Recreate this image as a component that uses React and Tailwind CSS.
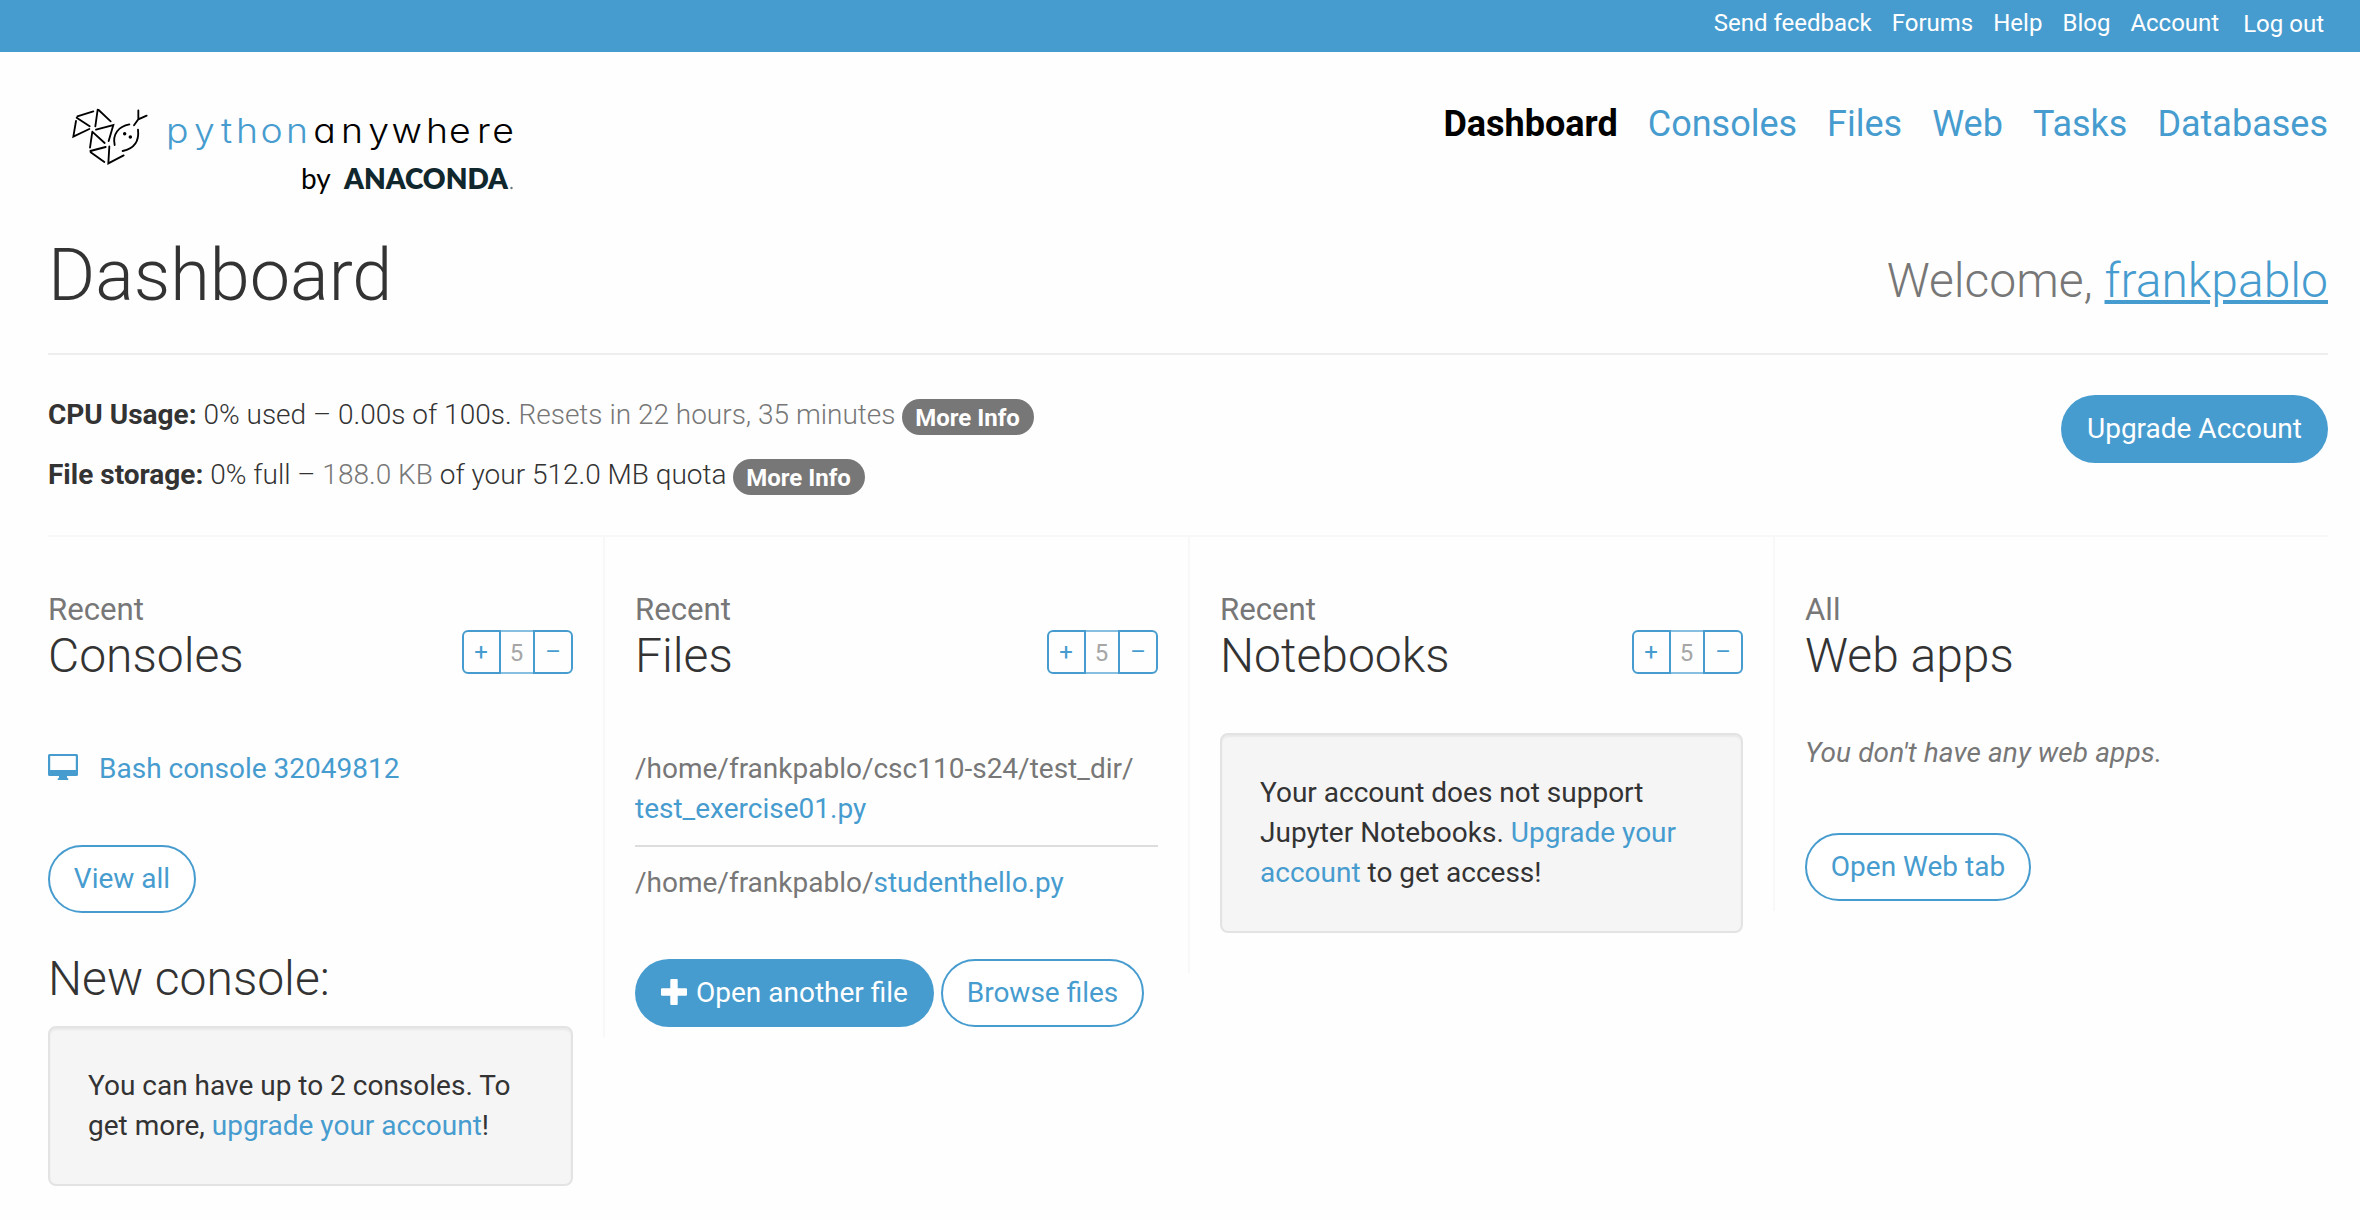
const BLUE_OUTLINE =
  'inline-flex h-[68px] items-center justify-center rounded-[34px] border-2 border-[#479ccf] bg-white text-[28px] leading-[40px] text-[#479ccf]';

function SnakeMark() {
  return (
    <svg
      viewBox="0 0 330 240"
      className="h-[80px] w-[110px] shrink-0"
      fill="none"
      stroke="#000"
      strokeWidth="5.5"
      strokeLinecap="round"
    >
      <path d="M52 64L100 49M50 68L89 94M48 78L40 125L88 102M113 44L106 94M116 45L152 79" />
      <path d="M108 104L160 90L146 138M97 110L90 158M99 112L134 144M91 168L137 156M92 172L133 201M148 154L145 205L191 181" />
      <path d="M164 150C157 118 175 94 208 88M234 104C238 138 222 161 188 168" />
      <path d="M222 91L235 73L260 62M235 73L235 46" />
      <circle cx="194" cy="116" r="2.5" fill="#000" />
      <circle cx="211" cy="126" r="2.5" fill="#000" />
    </svg>
  );
}

function Wordmark() {
  return (
    <svg viewBox="-10 0 360 110" className="-ml-[10px] h-[110px] w-[360px] shrink-0">
      <g
        transform="scale(1.1 1)"
        fontFamily="Inter, sans-serif"
        fontSize="34"
        fontWeight="300"
        style={{ fontFeatureSettings: '"cv11"' }}
      >
        <text y="48" x="-3.7 21.8 46.4 60 82.2 105.5" fill="#479ccf">
          python
        </text>
        <text y="48" x="130.3 155.5 180.2 201.4 232.7 253.6 279 293" fill="#000">
          anywhere
        </text>
      </g>
      <text x="131" y="94" fontFamily="Lato, sans-serif" fontSize="28" fill="#000">
        by
      </text>
      <text
        x="174"
        y="94"
        fontFamily="Lato, sans-serif"
        fontSize="28"
        fontWeight="800"
        fill="#10282d"
        textLength="164"
      >
        ANACONDA
      </text>
      <circle cx="341.500" cy="93" r="1.2" fill="#6b7678" />
    </svg>
  );
}

function MonitorIcon() {
  return (
    <svg viewBox="0 0 30 26" className="mb-[4px] h-[26px] w-[30px] shrink-0" fill="#479ccf">
      <path
        fillRule="evenodd"
        d="M1.5 0h27A1.5 1.5 0 0 1 30 1.500v19a1.500 1.500 0 0 1-1.500 1.500H19v1.500l1.300 1.200V26H9.700v-1.300l1.300-1.200V22H1.500A1.500 1.500 0 0 1 0 20.500v-19A1.500 1.500 0 0 1 1.500 0zM2.200 2v14h25.600V2z"
      />
    </svg>
  );
}

function PlusIcon() {
  return (
    <svg viewBox="0 0 26 26" className="mb-[2px] h-[26px] w-[26px] shrink-0" fill="#fff">
      <path d="M10.300 0h5.400q1 0 1 1v8.300H25q1 0 1 1v5.400q0 1-1 1h-8.300V25q0 1-1 1h-5.400q-1 0-1-1v-8.300H1q-1 0-1-1v-5.400q0-1 1-1h8.300V1q0-1 1-1z" />
    </svg>
  );
}

function Counter() {
  return (
    <div className="mt-[41px] flex h-[44px] w-[111px] text-[24px] leading-[38px] text-[#479ccf]">
      <button className="w-[39px] rounded-l-[6px] border-2 border-[#479ccf] pr-[1px]">+</button>
      <span className="w-[32px] border-y-2 border-[#87bfe1] pt-[2px] pr-[1px] text-center text-[#a6a6a6]">5</span>
      <button className="w-[40px] rounded-r-[6px] border-2 border-[#479ccf]">–</button>
    </div>
  );
}

function Heading({ small, title, counter }) {
  return (
    <div className="flex h-[103px] justify-between">
      <h2>
        <span className="block text-[31.2px] leading-[41px] text-[#777]">{small}</span>
        <span className="block text-[48px] leading-[52px] font-light">{title}</span>
      </h2>
      {counter && <Counter />}
    </div>
  );
}

function Well({ children }) {
  return (
    <div className="rounded-[8px] border-2 border-[#e3e3e3] bg-[#f5f5f5] p-[38px] text-[28px] leading-[40px] shadow-[inset_0_2px_2px_rgba(0,0,0,0.05)]">
      {children}
    </div>
  );
}

function MoreInfo() {
  return (
    <span className="ml-[6px] flex h-[36px] w-[132px] items-center justify-center rounded-[18px] bg-[#777] pt-[1px] text-[24px] leading-[36px] font-bold text-white">
      More Info
    </span>
  );
}

const Blue = ({ children }) => <a className="text-[#479ccf]">{children}</a>;

export default function App() {
  return (
    <div className="h-[1220px] w-[2360px] overflow-hidden bg-[#fefefe] font-['Roboto',sans-serif] text-[#333]">
      <nav className="flex h-[52px] justify-end gap-[20px] bg-[#479ccf] pr-[36px] text-[24px] leading-[46px] text-white">
        <a>Send feedback</a>
        <a>Forums</a>
        <a>Help</a>
        <a>Blog</a>
        <a>Account</a>
        <a className="ml-[4px] leading-[48px]">Log out</a>
      </nav>

      <header className="flex h-[184px] items-start justify-between pt-[43px] pr-[32px] pl-[60px]">
        <div className="flex">
          <SnakeMark />
          <Wordmark />
        </div>
        <nav className="mt-[3px] flex gap-[30px] text-[36px] leading-[52px] text-[#479ccf]">
          <a className="font-bold text-black">Dashboard</a>
          <a>Consoles</a>
          <a>Files</a>
          <a>Web</a>
          <a>Tasks</a>
          <a>Databases</a>
        </nav>
      </header>

      <main className="px-[32px] pl-[48px]">
        <div className="flex h-[119px] items-start justify-between border-b-2 border-[#eee]">
          <h1 className="text-[72px] leading-[80px] font-light">Dashboard</h1>
          <p className="mt-[19px] text-[48px] leading-[52px] font-light text-[#777]">
            Welcome, <a className="text-[#479ccf] underline">frankpablo</a>
          </p>
        </div>

        <section className="flex h-[182px] justify-between border-b-2 border-[#f8f8f8] pt-[40px]">
          <div className="text-[28px] leading-[40px] font-light">
            <div className="flex h-[60px]">
              <p>
                <b className="font-bold">CPU Usage:</b> 0% used – 0.00s of 100s.{' '}
                <span className="text-[#777]">Resets in 22 hours, 35 minutes</span>
              </p>
              <div className="pt-[4px]">
                <MoreInfo />
              </div>
            </div>
            <div className="flex h-[60px]">
              <p>
                <b className="font-bold">File storage:</b> 0% full – <span className="text-[#777]">188.0 KB</span> of
                your 512.0 MB quota
              </p>
              <div className="pt-[4px]">
                <MoreInfo />
              </div>
            </div>
          </div>
          <button className="h-[68px] w-[267px] rounded-[34px] bg-[#479ccf] text-[28px] leading-[40px] text-white">
            Upgrade Account
          </button>
        </section>

        <div className="flex items-start">
          <section className="w-[555px] pt-[52px] pr-[30px]">
            <Heading small="Recent" title="Consoles" counter />
            <div className="mt-[57px] flex h-[40px] items-center gap-[21px] text-[28px] leading-[40px]">
              <MonitorIcon />
              <Blue>Bash console 32049812</Blue>
            </div>
            <button className={`${BLUE_OUTLINE} mt-[56px] flex w-[148px]`}>View all</button>
            <h3 className="mt-[40px] text-[48px] leading-[52px] font-light">New console:</h3>
            <div className="mt-[21px]">
              <Well>
                You can have up to 2 consoles. To
                <br />
                get more, <Blue>upgrade your account</Blue>!
              </Well>
            </div>
          </section>

          <section className="w-[585px] border-l-2 border-[#f8f8f8] px-[30px] pt-[52px] pb-[10px]">
            <Heading small="Recent" title="Files" counter />
            <div className="mt-[57px] text-[28px] leading-[40px] text-[#777]">
              <p className="h-[98px] border-b-2 border-[#ddd]">
                /home/frankpablo/csc110-s24/test_dir/
                <br />
                <Blue>test_exercise01.py</Blue>
              </p>
              <p className="pt-[16px]">
                /home/frankpablo/<Blue>studenthello.py</Blue>
              </p>
            </div>
            <div className="mt-[56px] flex gap-[7px]">
              <button className="flex h-[68px] w-[299px] items-center justify-center gap-[9px] rounded-[34px] bg-[#479ccf] text-[28px] leading-[40px] text-white">
                <PlusIcon />
                Open another file
              </button>
              <button className={`${BLUE_OUTLINE} w-[203px]`}>Browse files</button>
            </div>
          </section>

          <section className="w-[585px] border-l-2 border-[#f8f8f8] px-[30px] pt-[52px] pb-[40px]">
            <Heading small="Recent" title="Notebooks" counter />
            <div className="mt-[41px]">
              <Well>
                Your account does not support
                <br />
                Jupyter Notebooks.{' '}
                <Blue>
                  Upgrade your
                  <br />
                  account
                </Blue>{' '}
                to get access!
              </Well>
            </div>
          </section>

          <section className="w-[555px] border-l-2 border-[#f8f8f8] pt-[52px] pb-[10px] pl-[30px]">
            <Heading small="All" title="Web apps" />
            <p className="mt-[41px] text-[28px] leading-[40px] tracking-[0.1px] text-[#777] italic">
              You don't have any web apps.
            </p>
            <button className={`${BLUE_OUTLINE} mt-[60px] flex w-[226px]`}>Open Web tab</button>
          </section>
        </div>
      </main>
    </div>
  );
}
